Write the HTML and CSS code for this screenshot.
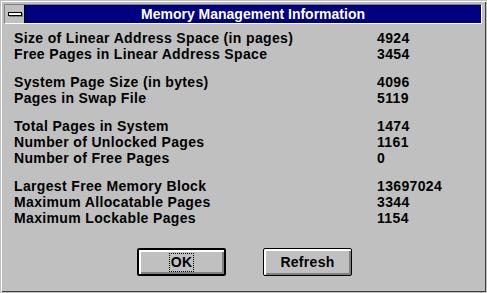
FILE: index.html
```html
<!DOCTYPE html>
<html>
<head>
<meta charset="utf-8">
<link rel="stylesheet" href="styles.css">
</head>
<body>
<div class="window">
  <div class="titlebar">
    <div class="sysmenu"><span class="sysbar"></span></div>
    <div class="caption">Memory Management Information</div>
  </div>
  <div class="content">
    <div class="group">
      <div class="row"><span class="label">Size of Linear Address Space (in pages)</span><span class="value">4924</span></div>
      <div class="row"><span class="label">Free Pages in Linear Address Space</span><span class="value">3454</span></div>
    </div>
    <div class="group">
      <div class="row"><span class="label">System Page Size (in bytes)</span><span class="value">4096</span></div>
      <div class="row"><span class="label">Pages in Swap File</span><span class="value">5119</span></div>
    </div>
    <div class="group">
      <div class="row"><span class="label">Total Pages in System</span><span class="value">1474</span></div>
      <div class="row"><span class="label">Number of Unlocked Pages</span><span class="value">1161</span></div>
      <div class="row"><span class="label">Number of Free Pages</span><span class="value">0</span></div>
    </div>
    <div class="group">
      <div class="row"><span class="label">Largest Free Memory Block</span><span class="value">13697024</span></div>
      <div class="row"><span class="label">Maximum Allocatable Pages</span><span class="value">3344</span></div>
      <div class="row"><span class="label">Maximum Lockable Pages</span><span class="value">1154</span></div>
    </div>
    <div class="buttons">
      <button class="btn btn-default"><span class="focus">OK</span></button>
      <button class="btn">Refresh</button>
    </div>
  </div>
</div>
</body>
</html>
```
FILE: styles.css
```css
html, body {
  margin: 0;
  padding: 0;
  background: #c0c0c0;
}
.window {
  box-sizing: border-box;
  width: 487px;
  height: 293px;
  background: #c0c0c0;
  border: 1px solid #c0c0c0;
  box-shadow: inset 1px 1px 0 #ffffff, inset -1px -1px 0 #404040;
  padding: 3px;
  font-family: "Liberation Sans", Arial, sans-serif;
  font-weight: bold;
  font-size: 14px;
  color: #000;
}
.titlebar {
  box-sizing: border-box;
  width: 478px;
  height: 20px;
  display: flex;
  border-top: 1px solid #808080;
  border-left: 1px solid #808080;
  border-bottom: 1px solid #ffffff;
  border-right: 1px solid #ffffff;
}
.sysmenu {
  width: 19px;
  height: 18px;
  background: #c0c0c0;
  border-right: 1px solid #000;
  display: flex;
  align-items: center;
  justify-content: center;
}
.sysbar {
  display: block;
  box-sizing: border-box;
  width: 14px;
  height: 4px;
  background: #fff;
  border: 1px solid #000;
  box-shadow: 1px 1px 0 #808080;
}
.caption {
  flex: 1;
  background: #000080;
  color: #fff;
  text-align: center;
  line-height: 18px;
  font-size: 14px;
}
.content {
  padding: 6px 0 0 10px;
}
.group {
  margin-bottom: 12px;
}
.row {
  display: grid;
  grid-template-columns: 363px auto;
  height: 16px;
  line-height: 16px;
  letter-spacing: 0.35px;
  white-space: nowrap;
}
.buttons {
  display: flex;
  gap: 37px;
  margin-top: 22px;
  padding-left: 123px;
}
.btn {
  box-sizing: border-box;
  width: 89px;
  height: 28px;
  margin: 0;
  padding: 0;
  background: #c0c0c0;
  border: 1px solid #000;
  border-radius: 2px;
  box-shadow: inset 1px 1px 0 #fff, inset 2px 2px 0 #fff, inset -1px -1px 0 #808080, inset -2px -2px 0 #808080;
  font-family: "Liberation Sans", Arial, sans-serif;
  font-weight: bold;
  font-size: 14px;
  color: #000;
  letter-spacing: 0.3px;
}
.btn-default {
  border: 2px solid #000;
}
.focus {
  display: inline-block;
  outline: 1px dotted #000;
  padding: 0 1px;
  line-height: 17px;
}
```
